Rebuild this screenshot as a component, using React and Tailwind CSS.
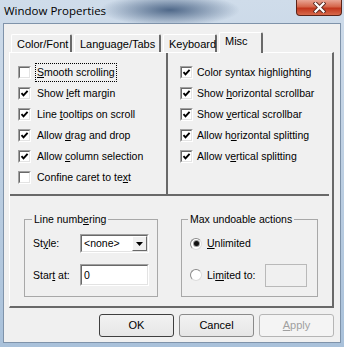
import React from 'react'

const LEFT = [
    { label: ['', 'S', 'mooth scrolling'], on: false, focus: true },
    { label: ['Show ', 'l', 'eft margin'], on: true },
    { label: ['Line ', 't', 'ooltips on scroll'], on: true },
    { label: ['Allow ', 'd', 'rag and drop'], on: true },
    { label: ['Allow ', 'c', 'olumn selection'], on: true },
    { label: ['Confine caret to te', 'x', 't'], on: false },
]

const RIGHT = [
    { label: ['Color syntax highlighting', '', ''], on: true },
    { label: ['Show ', 'h', 'orizontal scrollbar'], on: true },
    { label: ['Show ', 'v', 'ertical scrollbar'], on: true },
    { label: ['Allow h', 'o', 'rizontal splitting'], on: true },
    { label: ['Allow v', 'e', 'rtical splitting'], on: true },
]

function Mn({ parts }) {
    return (
        <>
            {parts[0]}
            {parts[1] && <u className="underline underline-offset-[1px]">{parts[1]}</u>}
            {parts[2]}
        </>
    )
}

function Check({ on }) {
    return (
        <span className="w-[13px] h-[13px] shrink-0 border border-t-[#a0a0a0] border-l-[#a0a0a0] border-r-white border-b-white">
            <span className="block w-full h-full border border-t-[#696969] border-l-[#696969] border-r-[#e3e3e3] border-b-[#e3e3e3] bg-white">
                {on && (
                    <svg width="9" height="9" viewBox="0 0 9 9" className="block">
                        <path d="M1.5 4.2 L3.5 6.4 L7.6 1.8" fill="none" stroke="#000" strokeWidth="1.9" />
                    </svg>
                )}
            </span>
        </span>
    )
}

function Radio({ on }) {
    return (
        <span className="w-[12px] h-[12px] shrink-0 rounded-full border border-t-[#8a8a8a] border-l-[#8a8a8a] border-r-[#dcdcdc] border-b-[#dcdcdc] bg-white flex items-center justify-center">
            {on && <span className="w-[5px] h-[5px] rounded-full bg-[#111] ring-1 ring-[#9a9a9a]" />}
        </span>
    )
}

function Sunken({ className, children }) {
    return (
        <div className={`shrink-0 border border-t-[#a0a0a0] border-l-[#a0a0a0] border-r-white border-b-white ${className}`}>
            <div className="h-full border border-t-[#696969] border-l-[#696969] border-r-[#e3e3e3] border-b-[#e3e3e3] bg-white flex items-center">
                {children}
            </div>
        </div>
    )
}

function Tab({ w, selected, children }) {
    return (
        <div
            className={`${w} ${selected ? 'h-[21px] -mb-px relative z-10 pt-[2px]' : 'h-[18px] pt-[3px]'} pl-[5px] bg-[#f0f0f0] border-t border-l border-t-white border-l-white border-r-2 border-r-[#696969] rounded-t-[2px]`}
        >
            {children}
        </div>
    )
}

function Button({ children, disabled, primary }) {
    return (
        <div
            className={`w-[75px] h-[23px] rounded-[3px] flex items-center justify-center border ${
                disabled
                    ? 'border-[#b5b5b5] bg-[#f4f4f4] text-[#a0a0a0]'
                    : primary
                      ? 'border-[#3f3f3f] bg-[linear-gradient(#f2f2f2,#e6e6e6)]'
                      : 'border-[#8a8a8a] bg-[linear-gradient(#f2f2f2,#e6e6e6)]'
            }`}
        >
            {children}
        </div>
    )
}

export default function App() {
    return (
        <div className="w-[344px] h-[347px] overflow-hidden relative bg-[radial-gradient(ellipse_70px_16px_at_170px_10px,#4f6889,transparent),linear-gradient(to_bottom,#cfdcea,#a9c1da)] font-['Liberation_Sans',Arial,sans-serif] text-[10.5px] leading-[13px] text-black">
            {/* Title bar */}
            <div className="h-[23px] pl-[4px] pt-[3px] font-['Open_Sans',sans-serif] text-[11.5px] leading-[15px] text-black">
                Window Properties
            </div>
            <div className="absolute top-0 right-[2px] w-[46px] h-[16px] rounded-b-[4px] border border-t-0 border-[#5c2418] bg-[linear-gradient(#e9a594,#d5654a_45%,#c2361c_55%,#d76a4c)] flex items-center justify-center">
                <svg width="13" height="11" viewBox="0 0 13 11">
                    <path d="M2.5 1.5 L10.5 9.5 M10.5 1.5 L2.5 9.5" stroke="#5a2a22" strokeWidth="4" strokeLinecap="square" />
                    <path d="M2.5 1.5 L10.5 9.5 M10.5 1.5 L2.5 9.5" stroke="#fff" strokeWidth="2.2" strokeLinecap="square" />
                </svg>
            </div>

            {/* Client area */}
            <div className="mx-[3px] h-[320px] border border-[#7f93aa] bg-[#f0f0f0] flex flex-col">
                {/* Tabs */}
                <div className="pl-[7px] pt-[8px]">
                    <div className="h-[20px] flex items-end gap-[2px] text-[11px]">
                        <Tab w="w-[61px]">Color/Font</Tab>
                        <Tab w="w-[87px]">Language/Tabs</Tab>
                        <Tab w="w-[54px]">Keyboard</Tab>
                        <Tab w="w-[44px]" selected>Misc</Tab>
                    </div>
                </div>

                {/* Panel */}
                <div className="ml-[5px] w-[325px] h-[256px] border-t border-l border-t-white border-l-white border-r-2 border-b-2 border-r-[#696969] border-b-[#696969] flex flex-col">
                    <div className="w-[319px] h-[143px] flex border-b-2 border-[#696969]">
                        <div className="w-[158px] border-r-2 border-[#696969] pt-[9px] pl-[8px]">
                            {LEFT.map((item, i) => (
                                <div key={i} className="h-[21px] flex items-center gap-[4px]">
                                    <Check on={item.on} />
                                    <span className={`px-[1px] py-[2px] border border-dotted ${item.focus ? 'border-black' : 'border-transparent'}`}>
                                        <Mn parts={item.label} />
                                    </span>
                                </div>
                            ))}
                        </div>
                        <div className="flex-1 pt-[9px] pl-[12px]">
                            {RIGHT.map((item, i) => (
                                <div key={i} className="h-[21px] flex items-center gap-[4px]">
                                    <Check on={item.on} />
                                    <span>
                                        <Mn parts={item.label} />
                                    </span>
                                </div>
                            ))}
                        </div>
                    </div>

                    {/* Group boxes */}
                    <div className="flex pl-[14px] pt-[23px] gap-[23px]">
                        <div className="relative w-[134px] h-[78px] border border-[#a8a8a8] pt-[14px] pl-[8px]">
                            <span className="absolute -top-[7px] left-[7px] px-[2px] bg-[#f0f0f0]">
                                Line numb<u className="underline underline-offset-[1px]">e</u>ring
                            </span>
                            <div className="h-[19px] flex items-center">
                                <span className="w-[47px] shrink-0">
                                    St<u className="underline underline-offset-[1px]">y</u>le:
                                </span>
                                <Sunken className="w-[69px] h-[19px]">
                                    <span className="flex-1 pl-[2px]">&lt;none&gt;</span>
                                    <span className="w-[15px] h-full bg-[#f0f0f0] border border-t-white border-l-white border-r-[#696969] border-b-[#696969] flex items-center justify-center">
                                        <svg width="7" height="4" viewBox="0 0 7 4">
                                            <path d="M0 0 H7 L3.5 4 Z" fill="#000" />
                                        </svg>
                                    </span>
                                </Sunken>
                            </div>
                            <div className="h-[22px] mt-[11px] flex items-center">
                                <span className="w-[47px] shrink-0">
                                    Star<u className="underline underline-offset-[1px]">t</u> at:
                                </span>
                                <Sunken className="w-[69px] h-[22px]">
                                    <span className="pl-[2px]">0</span>
                                </Sunken>
                            </div>
                        </div>

                        <div className="relative w-[137px] h-[78px] border border-[#a8a8a8] pt-[14px] pl-[8px]">
                            <span className="absolute -top-[7px] left-[6px] px-[2px] bg-[#f0f0f0]">Max undoable actions</span>
                            <div className="h-[19px] flex items-center gap-[5px]">
                                <Radio on />
                                <span>
                                    <u className="underline underline-offset-[1px]">U</u>nlimited
                                </span>
                            </div>
                            <div className="h-[22px] mt-[11px] flex items-center">
                                <Radio />
                                <span className="w-[58px] shrink-0 pl-[5px] box-content">
                                    Li<u className="underline underline-offset-[1px]">m</u>ited to:
                                </span>
                                <div className="w-[42px] h-[23px] shrink-0 border border-[#b9b9b9] bg-[#f0f0f0]" />
                            </div>
                        </div>
                    </div>
                </div>

                {/* Buttons */}
                <div className="mt-[6px] pr-[6px] flex justify-end gap-[5px] text-[11px]">
                    <Button primary>OK</Button>
                    <Button>Cancel</Button>
                    <Button disabled>
                        <span>
                            <u className="underline underline-offset-[1px]">A</u>pply
                        </span>
                    </Button>
                </div>
            </div>
        </div>
    )
}
